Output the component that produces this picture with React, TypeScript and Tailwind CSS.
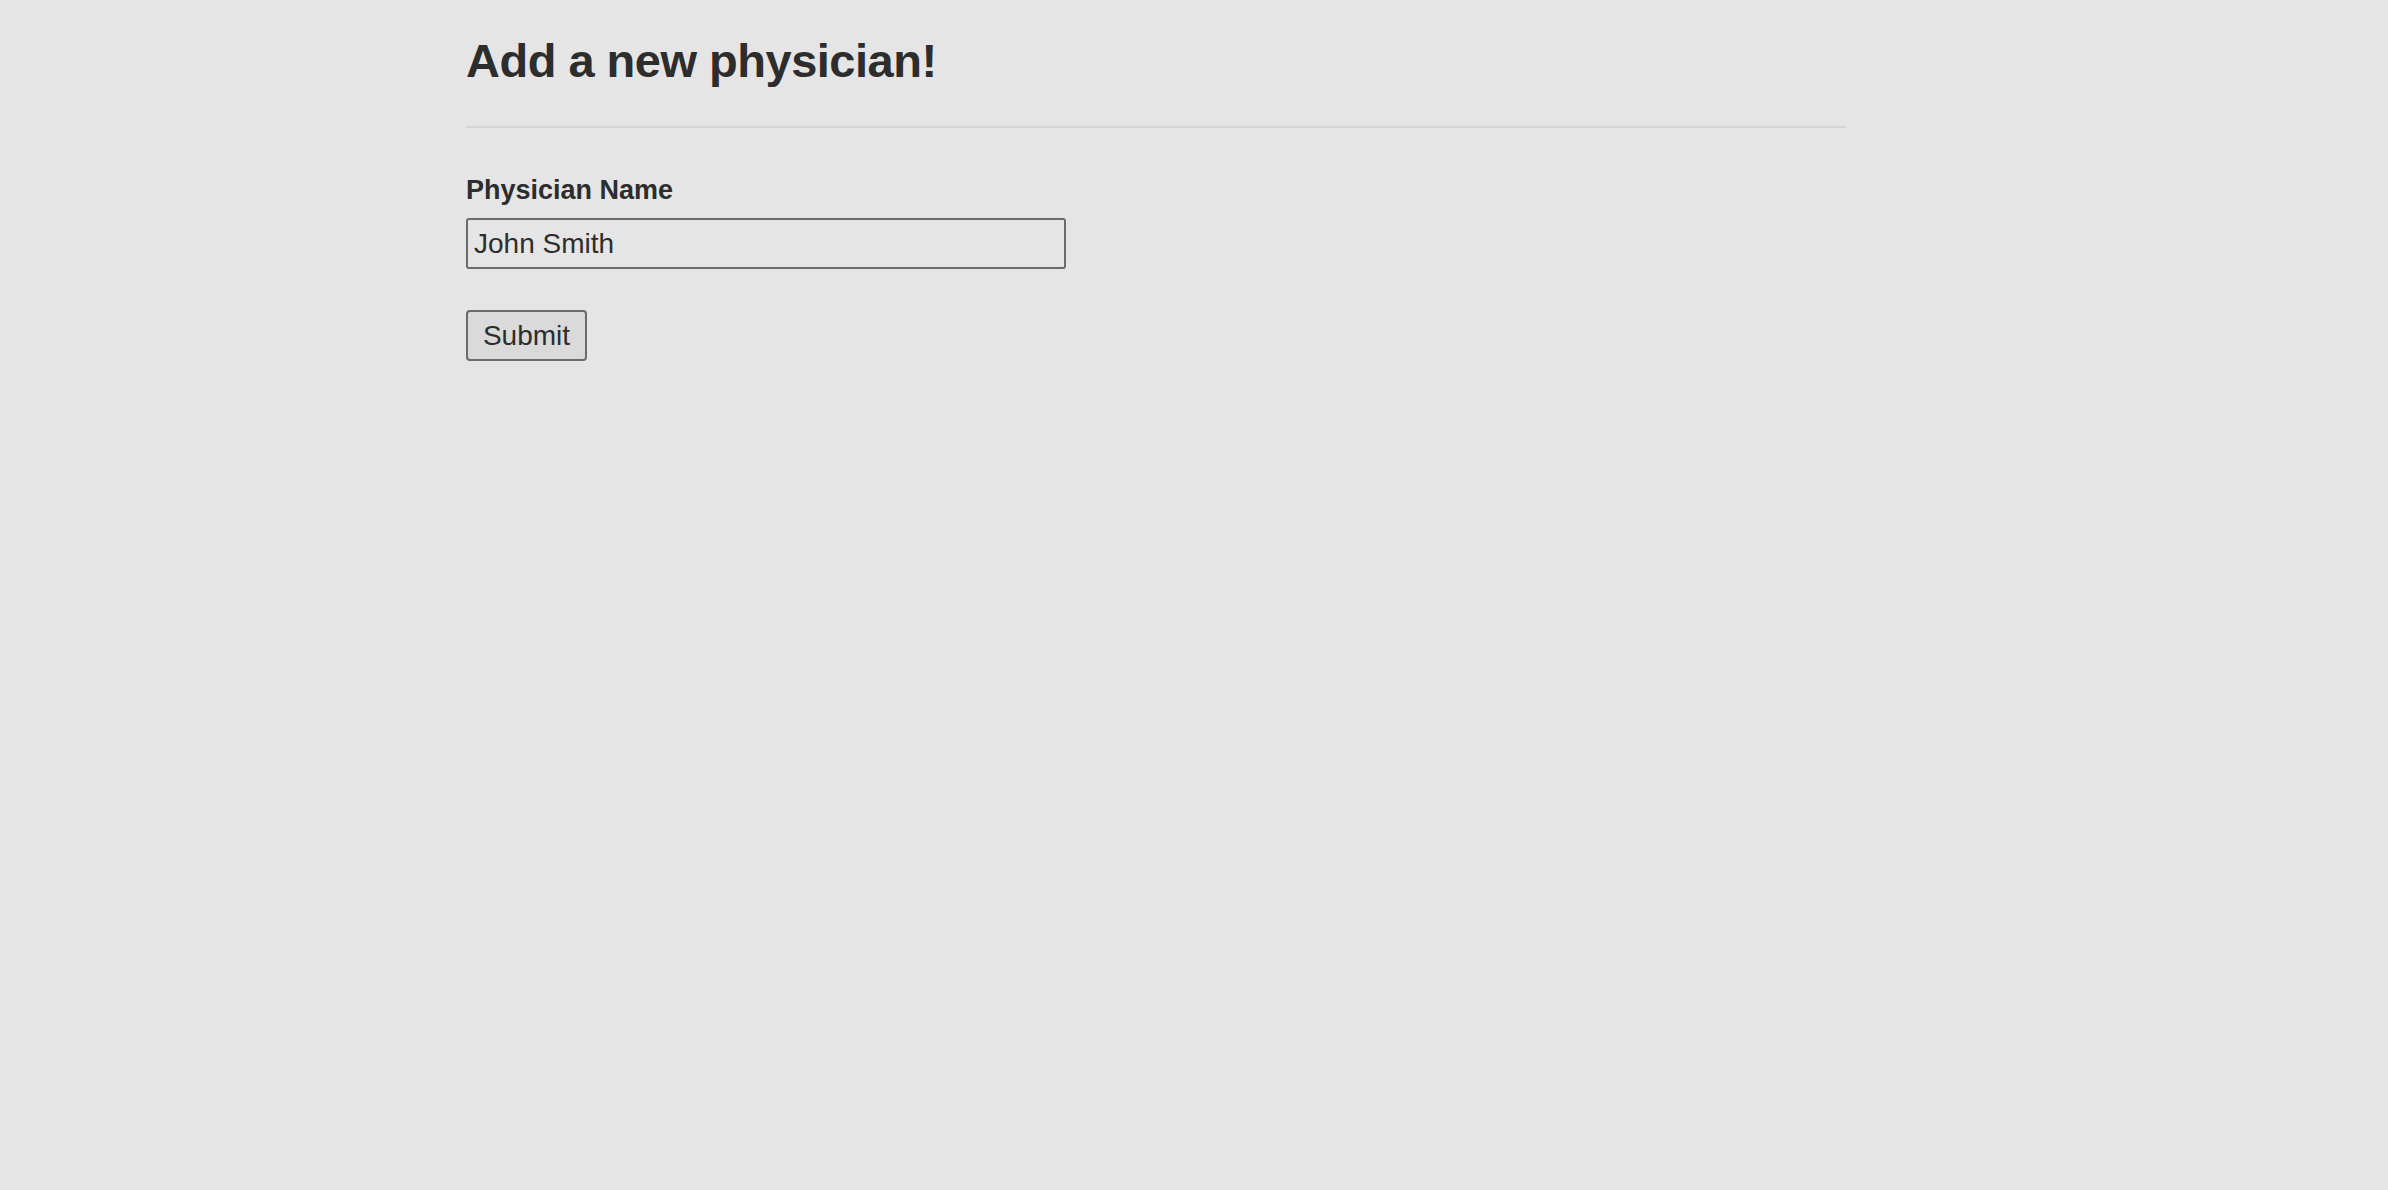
import React from "react";

export default function App() {
  return (
    <div className="min-h-[1190px] w-full bg-[#e5e5e5] text-[#2d2d2d]" style={{ fontFamily: '"Liberation Sans", Arial, sans-serif' }}>
      <div className="ml-[466px] w-[1380px] pt-[37px]">
        <h1 className="text-[47px] font-bold leading-none tracking-[-0.5px]">Add a new physician!</h1>
        <div className="mt-[42px] h-[2px] w-full bg-[#d5d5d5]" />
        <div className="mt-[49px]">
          <div className="text-[27px] font-bold leading-none">Physician Name</div>
          <input
            defaultValue="John Smith"
            className="mt-[14px] block h-[51px] w-[600px] rounded-[3px] border-2 border-[#6b6b6b] bg-transparent px-[6px] text-[28px] text-[#2d2d2d] outline-none"
            style={{ fontFamily: '"Liberation Sans", Arial, sans-serif' }}
          />
          <button
            className="mt-[41px] block h-[51px] w-[121px] rounded-[4px] border-2 border-[#6b6b6b] bg-[#dadada] text-[28px] text-[#2d2d2d]"
            style={{ fontFamily: '"Liberation Sans", Arial, sans-serif' }}
          >
            Submit
          </button>
        </div>
      </div>
    </div>
  );
}
